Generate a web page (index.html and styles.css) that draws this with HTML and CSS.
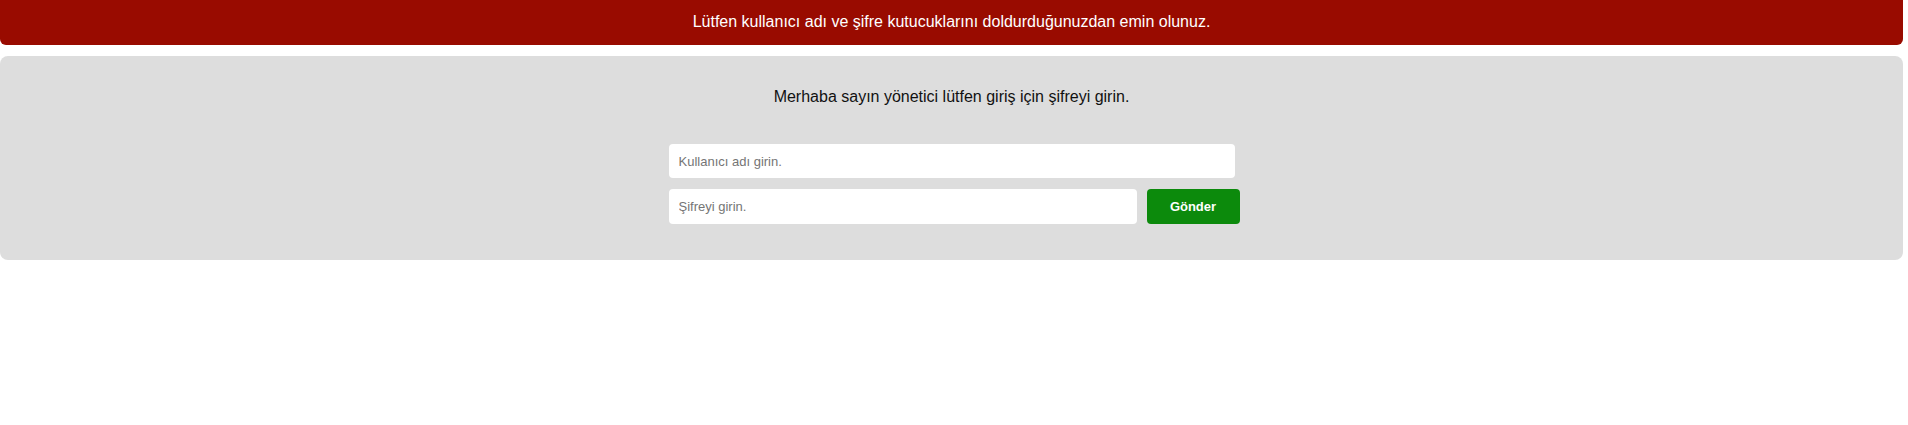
FILE: index.html
```html
<!DOCTYPE html>
<html lang="tr">
<head>
    <meta charset="UTF-8">
    <title>Yönetici Girişi</title>
    <link rel="stylesheet" href="styles.css">
</head>
<body>
    <div class="page">
        <div class="alert">Lütfen kullanıcı adı ve şifre kutucuklarını doldurduğunuzdan emin olunuz.</div>
        <div class="login-box">
            <p class="welcome">Merhaba sayın yönetici lütfen giriş için şifreyi girin.</p>
            <form class="login-form">
                <input type="text" class="field field-user" placeholder="Kullanıcı adı girin.">
                <div class="form-row">
                    <input type="password" class="field field-pass" placeholder="Şifreyi girin.">
                    <button type="button" class="submit-btn">Gönder</button>
                </div>
            </form>
        </div>
    </div>
</body>
</html>
```

FILE: styles.css
```css
body {
    margin: 0;
    font-family: 'Liberation Sans', Arial, sans-serif;
    background-color: #fff;
}

.page {
    margin-right: 5px;
}

.alert {
    background-color: #990b00;
    color: #fff;
    font-size: 16px;
    line-height: 18px;
    text-align: center;
    padding: 13px 0 14px;
    border-radius: 0 0 6px 6px;
}

.login-box {
    margin-top: 11px;
    background-color: #dddddd;
    border-radius: 8px;
    padding: 32px 0 36px;
}

.welcome {
    margin: 0 0 38px;
    font-size: 16px;
    line-height: 18px;
    color: #111;
    text-align: center;
}

.login-form {
    width: 571px;
    margin: 0 auto;
    padding-left: 5px;
    display: flex;
    flex-direction: column;
    gap: 11px;
}

.form-row {
    display: flex;
    gap: 10px;
}

.field {
    box-sizing: border-box;
    height: 34px;
    border: none;
    border-radius: 4px;
    background-color: #fff;
    padding: 0 10px;
    font-family: 'Liberation Sans', Arial, sans-serif;
    font-size: 13px;
    color: #333;
    outline: none;
}

.field::placeholder {
    color: #757575;
}

.field-user {
    width: 566px;
}

.field-pass {
    width: 468px;
    height: 35px;
}

.submit-btn {
    width: 93px;
    height: 35px;
    border: none;
    border-radius: 4px;
    background-color: #0c8a0c;
    color: #fff;
    font-family: 'Liberation Sans', Arial, sans-serif;
    font-size: 13px;
    font-weight: bold;
    cursor: pointer;
}

.submit-btn:hover {
    background-color: #0a720a;
}
```
